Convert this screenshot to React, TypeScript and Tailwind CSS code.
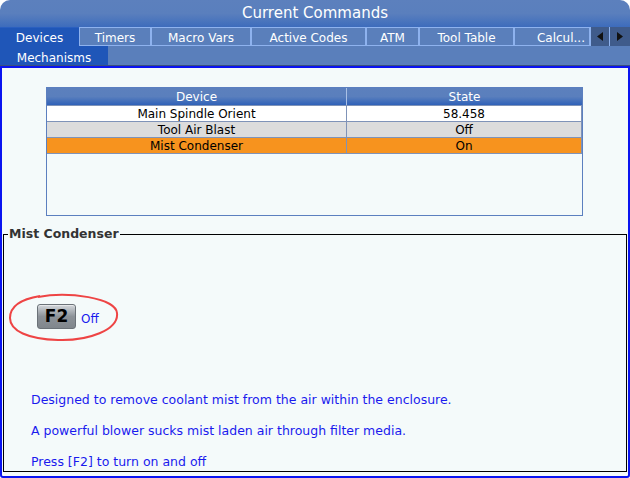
import React from "react";

const tabs = [
  { label: "Devices", w: "w-[79px]", active: true },
  { label: "Timers", w: "w-[72px]" },
  { label: "Macro Vars", w: "w-[100px]" },
  { label: "Active Codes", w: "w-[115px]" },
  { label: "ATM", w: "w-[53px]" },
  { label: "Tool Table", w: "w-[95px]" },
  { label: "Calcul...", w: "w-[76px]", right: true },
];

const rows = [
  { device: "Main Spindle Orient", state: "58.458", bg: "bg-white" },
  { device: "Tool Air Blast", state: "Off", bg: "bg-[#dcdcdc]" },
  { device: "Mist Condenser", state: "On", bg: "bg-[#f7931e]" },
];

export default function App() {
  return (
    <div
      className="w-[630px] h-[478px] bg-white flex flex-col overflow-hidden"
      style={{ fontFamily: '"DejaVu Sans", sans-serif' }}
    >
      {/* Title bar */}
      <div className="h-[27px] shrink-0 rounded-t-[10px] bg-gradient-to-b from-[#5c80bd] via-[#5a7fbd] to-[#3d6cbc] flex items-center justify-center text-white text-[15px]">
        Current Commands
      </div>

      {/* Tabs row */}
      <div className="h-[19px] shrink-0 flex bg-[#5a7fbb] text-white text-[12px] leading-none">
        {tabs.map((t) => (
          <div
            key={t.label}
            className={`${t.w} h-full shrink-0 flex items-center pt-[2px] ${
              t.right ? "justify-end pr-[4px]" : "justify-center"
            } ${
              t.active
                ? "bg-[#1f56b8] border-t border-[#2a5fc0]"
                : "bg-[#5a7fbb] border border-[#8eb2ee]"
            }`}
          >
            {t.label}
          </div>
        ))}
        <div className="w-[19px] h-full shrink-0 bg-[#3f5b8b] border-l border-[#8eb2ee] flex items-center justify-center">
          <svg width="6" height="9" viewBox="0 0 6 9">
            <path d="M6 0 L0 4.5 L6 9 Z" fill="#111" />
          </svg>
        </div>
        <div className="w-[21px] h-full shrink-0 bg-[#3f5b8b] border-l border-[#8eb2ee] flex items-center justify-center">
          <svg width="6" height="9" viewBox="0 0 6 9">
            <path d="M0 0 L6 4.5 L0 9 Z" fill="#111" />
          </svg>
        </div>
      </div>

      {/* Sub tabs row */}
      <div className="h-[20px] shrink-0 flex bg-[#5a7fbb] border-b border-[#3b4f7c] text-white text-[12px] leading-none">
        <div className="w-[108px] h-full bg-[#1f56b8] flex items-center justify-center pt-[4px]">
          Mechanisms
        </div>
      </div>

      {/* Content */}
      <div className="flex-1 border-2 border-[#0a14f0] rounded-bl-[3px] rounded-br-[3px] bg-[#f4fafa] flex flex-col">
        {/* Table */}
        <div className="ml-[44px] mt-[19px] w-[537px] h-[129px] border border-[#5b7fbf] flex flex-col text-[12px] leading-none">
          <div className="h-[17px] shrink-0 flex bg-gradient-to-b from-[#5c80bd] via-[#5a7fbd] to-[#2f61b8] text-white">
            <div className="w-[300px] flex items-center justify-center border-r border-[#a9c0e6]">
              Device
            </div>
            <div className="flex-1 flex items-center justify-center">State</div>
          </div>
          {rows.map((r) => (
            <div
              key={r.device}
              className={`h-[16px] shrink-0 flex ${r.bg} border-t border-[#7f93b8] text-black`}
            >
              <div className="w-[300px] flex items-center justify-center border-r border-[#7f93b8]">
                {r.device}
              </div>
              <div className="flex-1 flex items-center justify-center border-r border-[#7f93b8]">
                {r.state}
              </div>
            </div>
          ))}
          <div className="flex-1 border-t border-[#7f93b8]" />
        </div>

        {/* Fieldset */}
        <fieldset className="mx-[1px] mt-[12px] mb-[4px] flex-1 border border-black relative">
          <legend className="ml-[4px] px-[1px] text-[12.5px] font-bold text-[#333333] leading-none">
            Mist Condenser
          </legend>

          <div className="ml-[33px] mt-[63px] flex items-end gap-[5px] relative">
            <div className="w-[39px] h-[25px] rounded-[3px] border border-[#6b7278] bg-gradient-to-b from-[#d4d8dc] via-[#8c9298] to-[#80868c] flex items-center justify-center text-black font-bold text-[17px] leading-none shadow-[inset_0_1px_0_#e6e8ea]">
              F2
            </div>
            <span className="text-[12px] text-[#1a1aee] leading-none mb-[4px]">Off</span>
            <svg
              className="absolute left-[-29px] top-[-12px]"
              width="112"
              height="52"
              viewBox="0 0 112 52"
            >
              <path
                d="M30 5 C 60 -1, 108 6, 109 21 C 111 38, 80 49, 50 48 C 20 47, 2 39, 2 26 C 2 14, 14 7, 32 4"
                fill="none"
                stroke="#ee4444"
                strokeWidth="2"
              />
            </svg>
          </div>

          <div className="ml-[27px] mt-[64px] flex flex-col gap-[16.5px] text-[12.5px] leading-[14.5px] text-[#1a1aee]">
            <p>Designed to remove coolant mist from the air within the enclosure.</p>
            <p>A powerful blower sucks mist laden air through filter media.</p>
            <p>Press [F2] to turn on and off</p>
          </div>
        </fieldset>
      </div>
    </div>
  );
}
